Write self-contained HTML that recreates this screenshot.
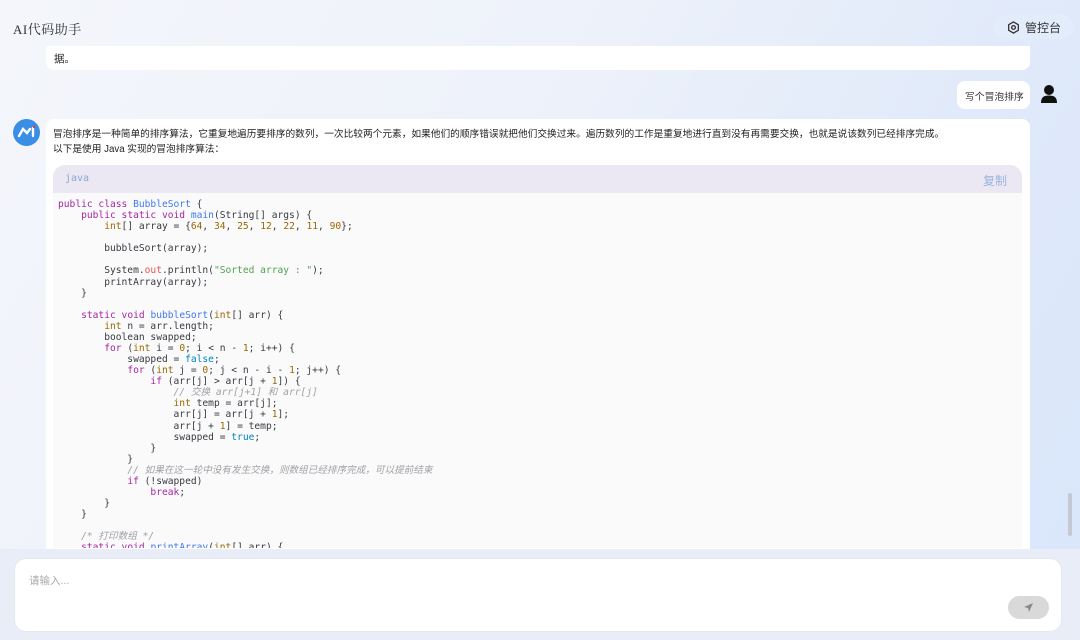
<!DOCTYPE html>
<html><head><meta charset="utf-8"><style>
*{margin:0;padding:0;box-sizing:border-box}
body{width:1080px;height:640px;overflow:hidden;font-family:"Liberation Sans","Noto Sans CJK SC",sans-serif;background:linear-gradient(120deg,#f4f6fb 0%,#eef2fa 40%,#dfe9fa 75%,#d9e6fa 100%);position:relative;color:#222}
.title{position:absolute;left:13px;top:19px;font-family:"Liberation Serif","Noto Serif CJK SC",serif;font-size:13px;color:#333;letter-spacing:.5px}
.admin{position:absolute;left:994px;top:15px;width:79px;height:24px;border-radius:12px;background:#e3ecfb;font-size:12px;color:#333;display:flex;align-items:center;padding-left:13px;gap:5px}
.bub{position:absolute;background:#fff;border-radius:8px}
.code{position:absolute;left:53px;top:165px;width:969px;height:383px;background:#fafafa;border-radius:12px 12px 0 0;overflow:hidden}
.ch{height:28px;background:#ebe8f4;font-family:"DejaVu Sans Mono",monospace;font-size:10px;color:#8aa8d6;padding:8px 0 0 12px;position:relative}
.ch span{position:absolute;right:15px;top:7px;font-family:"Liberation Sans","Noto Sans CJK SC",sans-serif;font-size:12px;color:#9ab5dc}
pre{font-family:"DejaVu Sans Mono","Noto Sans CJK SC",monospace;font-size:9.6px;line-height:11.08px;color:#383a42;padding:6px 0 0 5px}
.k{color:#a626a4}.f{color:#4078f2}.n{color:#986801}.s{color:#50a14f}.c{color:#a0a1a7;font-style:italic}.b{color:#0184bc}.r{color:#e45649}
.input{position:absolute;left:14px;top:558px;width:1048px;height:74px;background:#fff;border-radius:12px;border:1px solid #e4e8f2}
</style></head><body>
<div class="title">AI代码助手</div>
<div class="admin"><svg width="13" height="13" viewBox="0 0 14 14"><path d="M7 1 L12.2 4 V10 L7 13 L1.8 10 V4 Z" fill="none" stroke="#333" stroke-width="1.4"/><circle cx="7" cy="7" r="2" fill="none" stroke="#333" stroke-width="1.4"/></svg>管控台</div>
<div class="bub" style="left:46px;top:46px;width:984px;height:24px;border-radius:0 0 8px 8px;font-size:10.5px;padding:5px 8px">据。</div>
<div class="bub" style="left:957px;top:81px;width:73px;height:28px;font-size:9.8px;padding:8px 0 0 8px;color:#333">写个冒泡排序</div>
<svg style="position:absolute;left:1039px;top:84px" width="20" height="20" viewBox="0 0 20 20"><circle cx="10" cy="6" r="5" fill="#111"/><path d="M2 19 C2 13 5 11.5 10 11.5 C15 11.5 18 13 18 19 Z" fill="#111"/></svg>
<svg style="position:absolute;left:13px;top:119px" width="27" height="27" viewBox="0 0 27 27"><circle cx="13.5" cy="13.5" r="13.5" fill="#3b8ee6"/><path d="M6 17 L10 10 L14 14 L17 10 M20 9 V17" stroke="#fff" stroke-width="2.4" fill="none" stroke-linecap="round"/><circle cx="21" cy="8" r="1.2" fill="#e33"/></svg>
<div class="bub" style="left:46px;top:119px;width:984px;height:440px;border-radius:8px 8px 0 0"></div>
<div style="position:absolute;left:53px;top:127px;font-size:9.7px;line-height:15px;color:#222">冒泡排序是一种简单的排序算法，它重复地遍历要排序的数列，一次比较两个元素，如果他们的顺序错误就把他们交换过来。遍历数列的工作是重复地进行直到没有再需要交换，也就是说该数列已经排序完成。<br>以下是使用 Java 实现的冒泡排序算法：</div>
<div class="code"><div class="ch">java<span>复制</span></div>
<pre><span class="k">public class</span> <span class="f">BubbleSort</span> {
    <span class="k">public static void</span> <span class="f">main</span>(String[] args) {
        <span class="n">int</span>[] array = {<span class="n">64</span>, <span class="n">34</span>, <span class="n">25</span>, <span class="n">12</span>, <span class="n">22</span>, <span class="n">11</span>, <span class="n">90</span>};

        bubbleSort(array);

        System.<span class="r">out</span>.println(<span class="s">"Sorted array : "</span>);
        printArray(array);
    }

    <span class="k">static void</span> <span class="f">bubbleSort</span>(<span class="n">int</span>[] arr) {
        <span class="n">int</span> n = arr.length;
        boolean swapped;
        <span class="k">for</span> (<span class="n">int</span> i = <span class="n">0</span>; i &lt; n - <span class="n">1</span>; i++) {
            swapped = <span class="b">false</span>;
            <span class="k">for</span> (<span class="n">int</span> j = <span class="n">0</span>; j &lt; n - i - <span class="n">1</span>; j++) {
                <span class="k">if</span> (arr[j] &gt; arr[j + <span class="n">1</span>]) {
                    <span class="c">// 交换 arr[j+1] 和 arr[j]</span>
                    <span class="n">int</span> temp = arr[j];
                    arr[j] = arr[j + <span class="n">1</span>];
                    arr[j + <span class="n">1</span>] = temp;
                    swapped = <span class="b">true</span>;
                }
            }
            <span class="c">// 如果在这一轮中没有发生交换，则数组已经排序完成，可以提前结束</span>
            <span class="k">if</span> (!swapped)
                <span class="k">break</span>;
        }
    }

    <span class="c">/* 打印数组 */</span>
    <span class="k">static void</span> <span class="f">printArray</span>(<span class="n">int</span>[] arr) {
</pre></div>
<div style="position:absolute;left:0;top:549px;width:1080px;height:91px;background:#e9edf8"></div>
<div style="position:absolute;left:1068px;top:493px;width:4px;height:43px;border-radius:2px;background:#c4c8d0"></div>
<div class="input"><div style="position:absolute;left:14px;top:14px;font-size:10.5px;color:#aaa">请输入...</div>
<div style="position:absolute;left:993px;top:37px;width:41px;height:23px;border-radius:12px;background:#d9d9d9"><svg style="position:absolute;left:15px;top:6px" width="11" height="11" viewBox="0 0 11 11"><path d="M1 5 L10 1 L6 10 L5 6 Z" fill="#888"/></svg></div></div>
</body></html>
